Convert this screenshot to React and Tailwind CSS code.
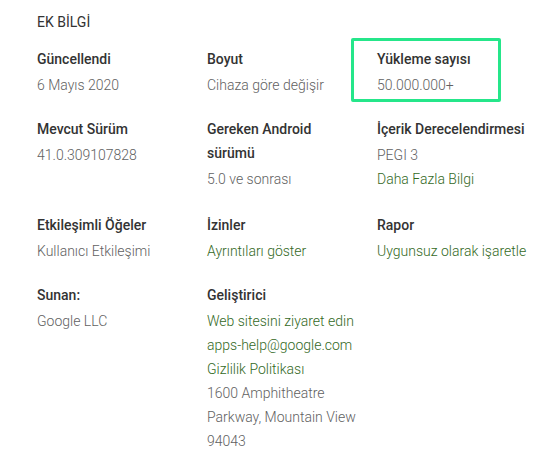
const rows = [
  [
    { label: 'Güncellendi', values: [{ text: '6 Mayıs 2020' }] },
    { label: 'Boyut', values: [{ text: 'Cihaza göre değişir' }] },
    { label: 'Yükleme sayısı', values: [{ text: '50.000.000+' }], highlight: true },
  ],
  [
    { label: 'Mevcut Sürüm', values: [{ text: '41.0.309107828' }] },
    { label: 'Gereken Android sürümü', values: [{ text: '5.0 ve sonrası' }] },
    {
      label: 'İçerik Derecelendirmesi',
      values: [{ text: 'PEGI 3' }, { text: 'Daha Fazla Bilgi', link: true }],
    },
  ],
  [
    { label: 'Etkileşimli Öğeler', values: [{ text: 'Kullanıcı Etkileşimi' }] },
    { label: 'İzinler', values: [{ text: 'Ayrıntıları göster', link: true }] },
    { label: 'Rapor', values: [{ text: 'Uygunsuz olarak işaretle', link: true }] },
  ],
  [
    { label: 'Sunan:', values: [{ text: 'Google LLC' }] },
    {
      label: 'Geliştirici',
      values: [
        { text: 'Web sitesini ziyaret edin', link: true },
        { text: 'apps-help@google.com', link: true },
        { text: 'Gizlilik Politikası', link: true },
        { text: '1600 Amphitheatre Parkway, Mountain View 94043' },
      ],
    },
  ],
]

function Item({ item, last }) {
  return (
    <div className={last ? 'relative flex-1' : 'relative w-[170px] pr-5 shrink-0'}>
      {item.highlight && (
        <div className="absolute left-[-26px] top-[-9px] w-[150px] h-[64px] border-[3px] border-[#25e68a] rounded-[2px]" />
      )}
      <div className="font-medium text-[#333333] leading-6 mb-[2px]">{item.label}</div>
      {item.values.map((v, i) => (
        <div
          key={i}
          className={v.link ? 'font-light text-[#33691e] leading-6' : 'font-light text-[#616161] leading-6'}
        >
          {v.text}
        </div>
      ))}
    </div>
  )
}

export default function App() {
  return (
    <div className="bg-white w-[559px] h-[468px] pl-[37px] pt-[10px] text-[14px] font-['Roboto',sans-serif]">
      <h2 className="text-[#333333] leading-6 mb-[13px]">EK BİLGİ</h2>
      <div className="flex flex-col gap-5">
        {rows.map((row, i) => (
          <div key={i} className={i === 1 ? 'flex pb-[2px]' : 'flex'}>
            {row.map((item, j) => (
              <Item key={item.label} item={item} last={j === 2} />
            ))}
          </div>
        ))}
      </div>
    </div>
  )
}
